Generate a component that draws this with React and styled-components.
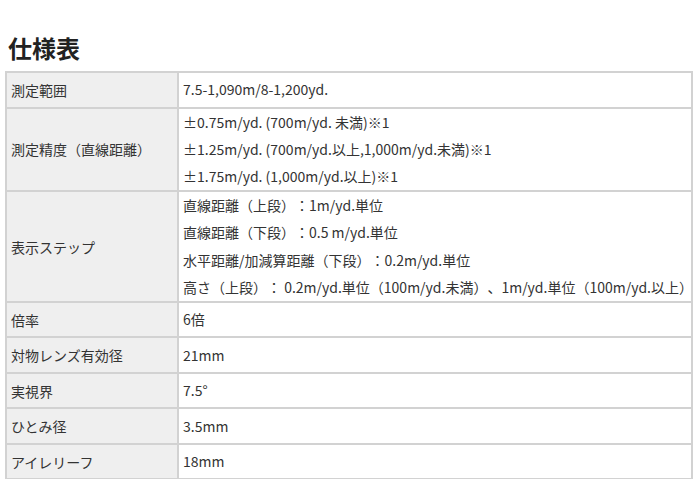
import React from 'react';
import styled, { createGlobalStyle } from 'styled-components';

const GlobalStyle = createGlobalStyle`
  body {
    margin: 0;
    background: #ffffff;
    font-family: "Noto Sans CJK JP", "Noto Sans", sans-serif;
    color: #333333;
    text-spacing-trim: space-all;
  }
`;

const Page = styled.div`
  padding: 0 5px;
`;

const Heading = styled.h2`
  margin: 0;
  padding: 33px 0 0 3px;
  height: 38px;
  font-size: 24px;
  font-weight: bold;
  line-height: 30px;
  color: #222222;
`;

const Table = styled.table`
  width: 688px;
  border-collapse: collapse;
  table-layout: fixed;
  font-size: 14px;
`;

const Label = styled.th`
  width: 163px;
  background: #efefef;
  border: 2px solid #d2d2d2;
  padding: 0 3px 0 4px;
  height: 33.5px;
  text-align: left;
  font-weight: normal;
  vertical-align: middle;
`;

const Value = styled.td`
  border: 2px solid #d2d2d2;
  padding: 0 3px 0 4px;
  height: 33.5px;
  vertical-align: middle;
`;

const Line = styled.div`
  line-height: 27.2px;
  white-space: nowrap;
`;

const specs = [
  { label: '測定範囲', lines: ['7.5-1,090m/8-1,200yd.'] },
  {
    label: '測定精度（直線距離）',
    lines: [
      '±0.75m/yd. (700m/yd. 未満)※1',
      '±1.25m/yd. (700m/yd.以上,1,000m/yd.未満)※1',
      '±1.75m/yd. (1,000m/yd.以上)※1',
    ],
  },
  {
    label: '表示ステップ',
    lines: [
      '直線距離（上段）：1m/yd.単位',
      '直線距離（下段）：0.5 m/yd.単位',
      '水平距離/加減算距離（下段）：0.2m/yd.単位',
      '高さ（上段）： 0.2m/yd.単位（100m/yd.未満）、1m/yd.単位（100m/yd.以上）',
    ],
  },
  { label: '倍率', lines: ['6倍'] },
  { label: '対物レンズ有効径', lines: ['21mm'] },
  { label: '実視界', lines: ['7.5°'] },
  { label: 'ひとみ径', lines: ['3.5mm'] },
  { label: 'アイレリーフ', lines: ['18mm'] },
];

const App = () => {
  return (
    <>
      <GlobalStyle />
      <Page>
        <Heading>仕様表</Heading>
        <Table>
          <tbody>
            {specs.map(spec => (
              <tr key={spec.label}>
                <Label>{spec.label}</Label>
                <Value>
                  {spec.lines.map(line => (
                    <Line key={line}>{line}</Line>
                  ))}
                </Value>
              </tr>
            ))}
          </tbody>
        </Table>
      </Page>
    </>
  );
};

export default App;
